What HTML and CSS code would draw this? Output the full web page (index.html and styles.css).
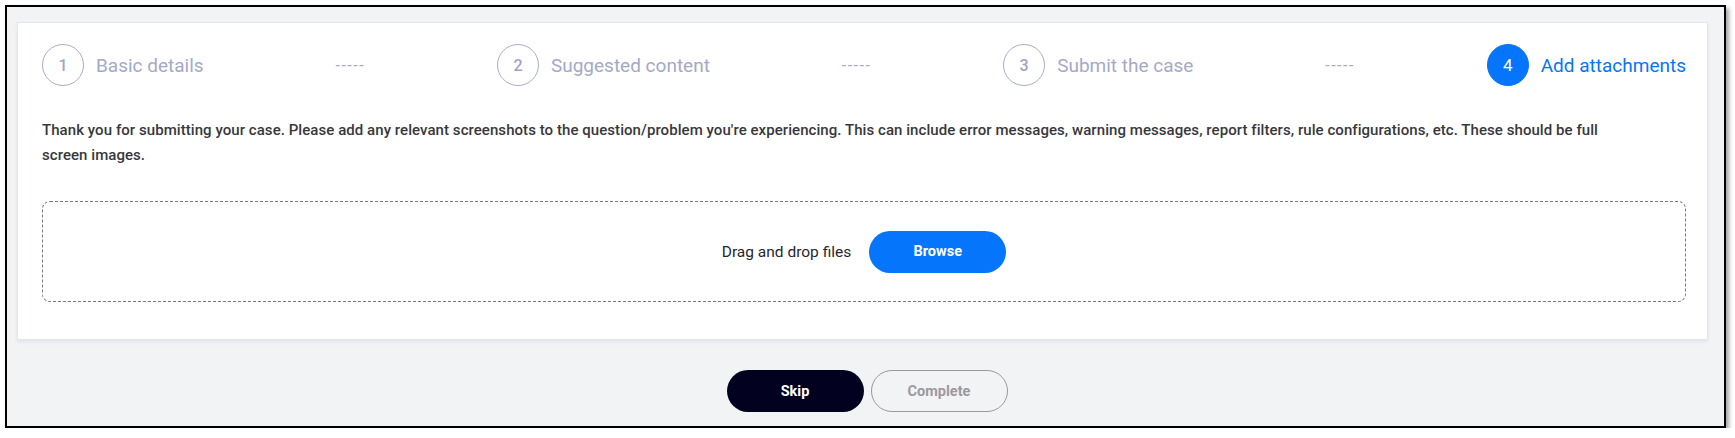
FILE: index.html
```html
<!DOCTYPE html>
<html lang="en">
<head>
<meta charset="utf-8">
<title>Add attachments</title>
<link rel="stylesheet" href="styles.css">
</head>
<body>
<div class="frame">
  <section class="card">
    <ol class="steps">
      <li class="step"><span class="num">1</span><span class="label">Basic details</span></li>
      <li class="sep">-----</li>
      <li class="step"><span class="num">2</span><span class="label">Suggested content</span></li>
      <li class="sep">-----</li>
      <li class="step"><span class="num">3</span><span class="label">Submit the case</span></li>
      <li class="sep">-----</li>
      <li class="step active"><span class="num">4</span><span class="label">Add attachments</span></li>
    </ol>
    <p class="intro">Thank you for submitting your case. Please add any relevant screenshots to the question/problem you're experiencing. This can include error messages, warning messages, report filters, rule configurations, etc. These should be full screen images.</p>
    <div class="dropzone">
      <span class="drop-text">Drag and drop files</span>
      <button class="btn btn-blue" type="button">Browse</button>
    </div>
  </section>
  <div class="actions">
    <button class="btn btn-dark" type="button">Skip</button>
    <button class="btn btn-outline" type="button">Complete</button>
  </div>
</div>
</body>
</html>
```
FILE: styles.css
```css
* { box-sizing: border-box; }

html, body {
  margin: 0;
  padding: 0;
  background: #ffffff;
}

body {
  font-family: Roboto, "Liberation Sans", Arial, sans-serif;
}

.frame {
  margin: 5px 0 0 5px;
  width: 1721px;
  height: 423px;
  border: 2px solid #000;
  background: #f2f3f5;
  box-shadow: 3px 3px 4px rgba(0, 0, 0, 0.35);
  padding: 15px 16px 14px 10px;
  display: flex;
  flex-direction: column;
}

.card {
  background: #fff;
  border: 1px solid #e4e4f0;
  box-shadow: 0 2px 3px rgba(60, 60, 110, 0.08);
  padding: 21px 21px 35px 24px;
  height: 318px;
}

.steps {
  list-style: none;
  margin: 0;
  padding: 0;
  display: flex;
  justify-content: space-between;
  align-items: center;
  height: 42px;
  color: #a4a9c8;
}

.step {
  display: flex;
  align-items: center;
  gap: 12px;
}

.num {
  width: 42px;
  height: 42px;
  border: 1px solid #a9adca;
  border-radius: 50%;
  display: flex;
  align-items: center;
  justify-content: center;
  font-size: 16px;
  font-weight: 500;
  color: #a0a5c4;
}

.label {
  font-size: 19px;
  font-weight: 400;
  color: #a4a9c8;
}

.sep {
  font-size: 16px;
  letter-spacing: 1.5px;
  color: #a4a9c8;
}

.step.active .num {
  background: #0575fb;
  border-color: #0575fb;
  color: #fff;
  font-weight: 400;
  font-size: 17px;
}

.step.active .label {
  color: #0575fb;
}

.intro {
  margin: 32px 0 0 0;
  max-width: 1592px;
  font-size: 15px;
  font-weight: 500;
  letter-spacing: 0.06px;
  line-height: 25px;
  color: #38383c;
}

.dropzone {
  margin-top: 33px;
  height: 101px;
  border: 1px dashed #77777c;
  border-radius: 8px;
  display: flex;
  align-items: center;
  justify-content: center;
  gap: 18px;
}

.drop-text {
  font-size: 15.5px;
  color: #27272f;
}

.btn {
  width: 137px;
  height: 42px;
  border-radius: 21px;
  font-family: Roboto, "Liberation Sans", Arial, sans-serif;
  font-size: 14.5px;
  font-weight: 700;
  border: 1px solid transparent;
  padding: 0;
  cursor: pointer;
}

.btn-blue {
  background: #0575fb;
  color: #fff;
}

.actions {
  margin: 30px -16px 0 -7px;
  display: flex;
  justify-content: center;
  gap: 7px;
}

.btn-dark {
  background: #02011f;
  color: #fff;
}

.btn-outline {
  background: transparent;
  border-color: #9a9a9e;
  color: #9a9a9e;
}
```
